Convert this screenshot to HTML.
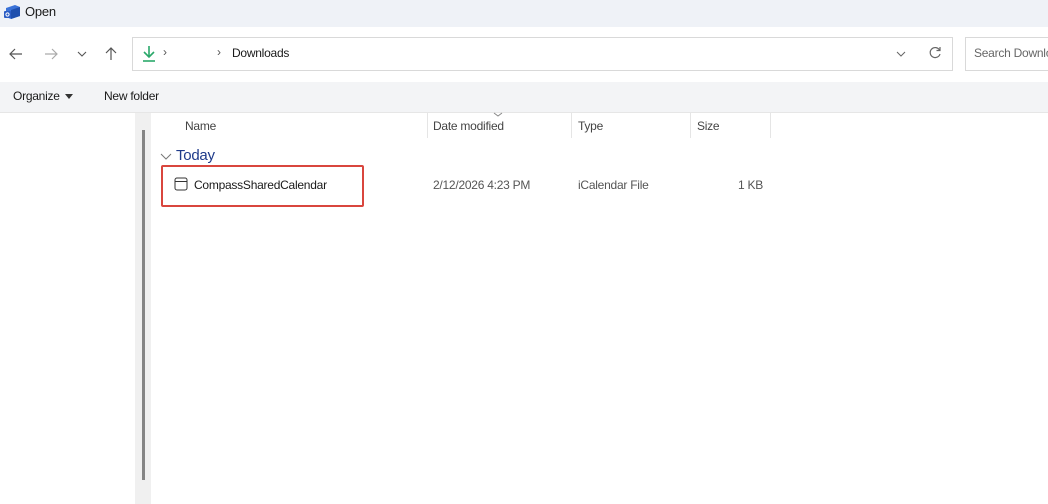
<!DOCTYPE html>
<html><head><style>
body{margin:0;width:1048px;height:504px;overflow:hidden;background:#fff;font-family:"Segoe UI","Liberation Sans",sans-serif;font-size:12px;letter-spacing:-0.25px;color:#1a1a1a;position:relative}
.a{position:absolute}
</style></head><body>
<div class="a" style="left:0;top:0;width:1048px;height:27px;background:#eff2f7"></div>
<svg class="a" style="left:3px;top:4px" width="18" height="16" viewBox="0 0 18 16"><path d="M3 4 L12 1 L17 3 L17 12 L8 15 L3 13Z" fill="#3a72d8"/><path d="M8 6 L17 3 L17 12 L8 15Z" fill="#1e4fae"/><rect x="1" y="7" width="7" height="7" rx="1" fill="#2a5cc4"/><circle cx="4.5" cy="10.5" r="1.6" fill="none" stroke="#fff" stroke-width="1"/></svg>
<div class="a" style="left:25px;top:4px;font-size:13px">Open</div>
<svg class="a" style="left:8px;top:46px" width="16" height="16" viewBox="0 0 16 16"><path d="M14 8H2M7 3L2 8L7 13" stroke="#555" stroke-width="1.2" fill="none"/></svg>
<svg class="a" style="left:43px;top:46px" width="16" height="16" viewBox="0 0 16 16"><path d="M2 8H14M9 3L14 8L9 13" stroke="#aaa" stroke-width="1.2" fill="none"/></svg>
<svg class="a" style="left:76px;top:49px" width="12" height="10" viewBox="0 0 12 10"><path d="M2 3L6 7L10 3" stroke="#555" stroke-width="1.1" fill="none"/></svg>
<svg class="a" style="left:103px;top:46px" width="16" height="16" viewBox="0 0 16 16"><path d="M8 14V2M3 7L8 2L13 7" stroke="#555" stroke-width="1.2" fill="none"/></svg>
<div class="a" style="left:132px;top:37px;width:819px;height:32px;border:1px solid #d9d9d9"></div>
<svg class="a" style="left:141px;top:45px" width="16" height="18" viewBox="0 0 16 18"><path d="M8 1V11M3 7L8 12L13 7" stroke="#2aa86a" stroke-width="1.6" fill="none"/><path d="M2 16H14" stroke="#2aa86a" stroke-width="1.6"/></svg>
<div class="a" style="left:163px;top:45px;color:#555">›</div>
<div class="a" style="left:217px;top:45px;color:#555">›</div>
<div class="a" style="left:232px;top:46px">Downloads</div>
<svg class="a" style="left:895px;top:49px" width="12" height="10" viewBox="0 0 12 10"><path d="M2 3L6 7L10 3" stroke="#666" stroke-width="1" fill="none"/></svg>
<svg class="a" style="left:928px;top:46px" width="14" height="14" viewBox="0 0 14 14"><path d="M11.5 4A5 5 0 1 0 12 8" stroke="#666" stroke-width="1.2" fill="none"/><path d="M12 1V4.5H8.5" stroke="#666" stroke-width="1.2" fill="none"/></svg>
<div class="a" style="left:965px;top:37px;width:90px;height:32px;border:1px solid #d9d9d9"></div>
<div class="a" style="left:974px;top:46px;color:#666;white-space:nowrap">Search Downloads</div>
<div class="a" style="left:0;top:82px;width:1048px;height:30px;background:#f3f4f6;border-bottom:1px solid #e6e6e6"></div>
<div class="a" style="left:13px;top:89px">Organize</div>
<svg class="a" style="left:64px;top:94px" width="10" height="6"><path d="M1 0H9L5 5Z" fill="#333"/></svg>
<div class="a" style="left:104px;top:89px">New folder</div>
<div class="a" style="left:135px;top:113px;width:16px;height:391px;background:#f0f0f0"></div>
<div class="a" style="left:142px;top:130px;width:3px;height:350px;background:#858585"></div>
<div class="a" style="left:185px;top:119px;color:#444">Name</div>
<div class="a" style="left:427px;top:113px;width:1px;height:25px;background:#e5e5e5"></div>
<svg class="a" style="left:493px;top:112px" width="10" height="6"><path d="M1 1L5 4L9 1" stroke="#888" fill="none"/></svg>
<div class="a" style="left:433px;top:119px;color:#444">Date modified</div>
<div class="a" style="left:571px;top:113px;width:1px;height:25px;background:#e5e5e5"></div>
<div class="a" style="left:578px;top:119px;color:#444">Type</div>
<div class="a" style="left:690px;top:113px;width:1px;height:25px;background:#e5e5e5"></div>
<div class="a" style="left:697px;top:119px;color:#444">Size</div>
<div class="a" style="left:770px;top:113px;width:1px;height:25px;background:#e5e5e5"></div>
<svg class="a" style="left:160px;top:153px" width="12" height="8"><path d="M1 1L6 6L11 1" stroke="#777" fill="none"/></svg>
<div class="a" style="left:176px;top:147px;font-size:15px;color:#1e3a8a">Today</div>
<div class="a" style="left:161px;top:165px;width:199px;height:38px;border:2px solid #d9463e;border-radius:2px"></div>
<svg class="a" style="left:174px;top:177px" width="14" height="14" viewBox="0 0 14 14"><rect x="1" y="1" width="12" height="12" rx="2" fill="none" stroke="#333"/><path d="M1 4.5H13" stroke="#333"/></svg>
<div class="a" style="left:194px;top:178px">CompassSharedCalendar</div>
<div class="a" style="left:433px;top:178px;color:#555">2/12/2026 4:23 PM</div>
<div class="a" style="left:578px;top:178px;color:#555">iCalendar File</div>
<div class="a" style="left:738px;top:178px;color:#555">1 KB</div>
</body></html>
